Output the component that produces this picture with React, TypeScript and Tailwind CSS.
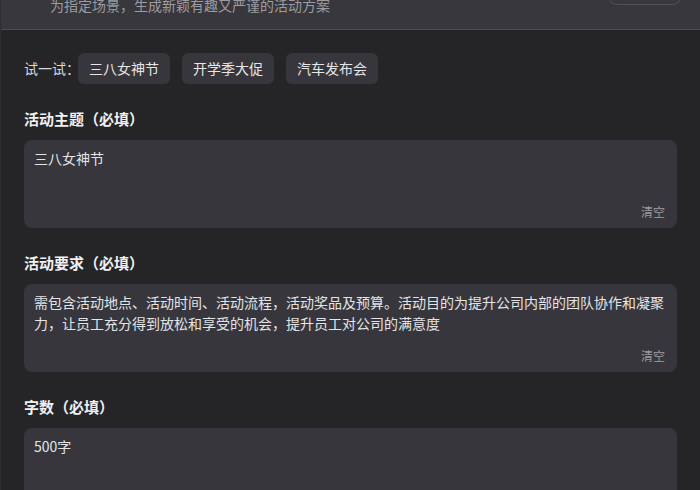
import React from "react";

const font = { fontFamily: '"Noto Sans CJK SC", "Noto Sans", sans-serif' };

function Field({ label, value, clear = true }: { label: string; value: string; clear?: boolean }) {
  return (
    <div className="flex flex-col">
      <div className="text-[15px] leading-[22px] font-semibold text-[#f0f0f2]">{label}</div>
      <div className="relative mt-[10px] h-[88px] rounded-lg bg-[#37363c] pl-[10px] pr-[8px] pt-[8px]">
        <div className="text-[14px] leading-[21px] text-[#e4e4e6] whitespace-pre-wrap break-words">{value}</div>
        {clear && (
          <div className="absolute bottom-[8px] right-[12px] text-[12px] leading-[16px] text-[#9c9ca0]">清空</div>
        )}
      </div>
    </div>
  );
}

export default function App() {
  const chips = ["三八女神节", "开学季大促", "汽车发布会"];
  return (
    <div style={font} className="h-[490px] w-[700px] overflow-hidden bg-[#252527] border-l border-[#2f2f33]">
      <div className="relative h-[30px] bg-[#38373c] border-b border-[#4d4c52]">
        <div className="absolute left-[49px] top-[-5px] text-[14px] leading-[20px] text-[#9b9ba1]">
          为指定场景，生成新颖有趣又严谨的活动方案
        </div>
        <div className="absolute left-[606px] top-[-20px] h-[25px] w-[75px] rounded-[10px] border border-[#525157]" />
      </div>
      <div className="flex flex-col pl-[23px] pr-[23px]">
        <div className="mt-[23px] flex items-center">
          <span className="mr-[-2px] text-[14px] text-[#d8d8dc]">试一试：</span>
          <div className="flex gap-3">
            {chips.map((c) => (
              <div
                key={c}
                className="flex h-[31px] items-center rounded-md bg-[#37363c] px-[11px] text-[14px] text-[#e6e6e8]"
              >
                {c}
              </div>
            ))}
          </div>
        </div>
        <div className="mt-[24px] flex flex-col gap-[24px]">
          <Field label="活动主题（必填）" value="三八女神节" />
          <Field
            label="活动要求（必填）"
            value="需包含活动地点、活动时间、活动流程，活动奖品及预算。活动目的为提升公司内部的团队协作和凝聚力，让员工充分得到放松和享受的机会，提升员工对公司的满意度"
          />
          <Field label="字数（必填）" value="500字" clear={false} />
        </div>
      </div>
    </div>
  );
}
